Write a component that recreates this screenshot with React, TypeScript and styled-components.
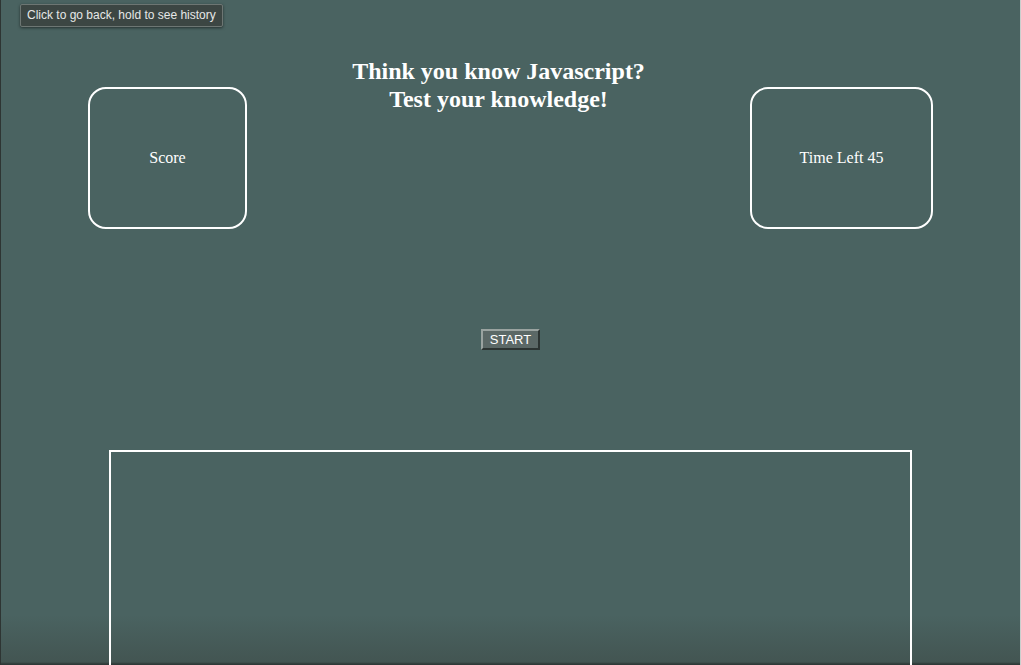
import styled, {createGlobalStyle} from "styled-components";
import React from "react";

const GlobalStyle = createGlobalStyle`
    html, body {
        margin: 0;
        padding: 0;
        height: 100%;
        overflow: hidden;
    }
    body {
        background: linear-gradient(to bottom, #4a6361 0, #4a6361 615px, #435552 662px, #2f3a38 664px);
        font-family: "Liberation Serif", "Times New Roman", serif;
        color: #ffffff;
    }
`

const Page = styled.div`
    position: relative;
    height: 665px;
    display: flex;
    flex-direction: column;
    border-left: 1px solid #2e3533;
    border-right: 1px solid #c9cfcd;
    box-sizing: border-box;
`

const Tooltip = styled.div`
    position: absolute;
    top: 4px;
    left: 19px;
    padding: 3px 6px 4px;
    background: #3c4643;
    border: 1px solid #6d7673;
    border-radius: 2px;
    box-shadow: 0 1px 3px rgba(0, 0, 0, 0.5);
    font-family: "Liberation Sans", Arial, sans-serif;
    font-size: 12px;
    color: #e6e8e7;
    white-space: nowrap;
`

const Header = styled.header`
    display: flex;
    align-items: flex-start;
    padding: 0 87px;
`

const StatBox = styled.div<{ $width: number }>`
    width: ${p => p.$width}px;
    height: 142px;
    margin-top: 87px;
    box-sizing: border-box;
    border: 2px solid #ffffff;
    border-radius: 18px;
    display: flex;
    align-items: center;
    justify-content: center;
    font-size: 16px;
`

const Title = styled.h1`
    flex: 1;
    margin: 57px 0 0;
    text-align: center;
    font-size: 24px;
    line-height: 28px;
    font-weight: bold;
`

const StartRow = styled.div`
    display: flex;
    justify-content: center;
    margin-top: 100px;
`

const StartButton = styled.button`
    width: 59px;
    height: 21px;
    padding: 0;
    background: #5b6866;
    color: #ffffff;
    font-family: "Liberation Sans", Arial, sans-serif;
    font-size: 13px;
    border: 2px solid;
    border-color: #9aa3a0 #2c3432 #2c3432 #9aa3a0;
    box-sizing: border-box;
    line-height: 17px;
`

const QuizArea = styled.section`
    flex: 1;
    width: 803px;
    margin: 100px 0 0 108px;
    box-sizing: border-box;
    border: 2px solid #ffffff;
    border-bottom: none;
`

export default function App(): React.ReactElement {
    return (
        <Page>
            <GlobalStyle/>
            <Header>
                <StatBox $width={159}>Score</StatBox>
                <Title>Think you know Javascript?<br/>Test your knowledge!</Title>
                <StatBox $width={183}>Time Left 45</StatBox>
            </Header>

            <StartRow>
                <StartButton>START</StartButton>
            </StartRow>

            <QuizArea/>

            <Tooltip>Click to go back, hold to see history</Tooltip>
        </Page>
    )
}
